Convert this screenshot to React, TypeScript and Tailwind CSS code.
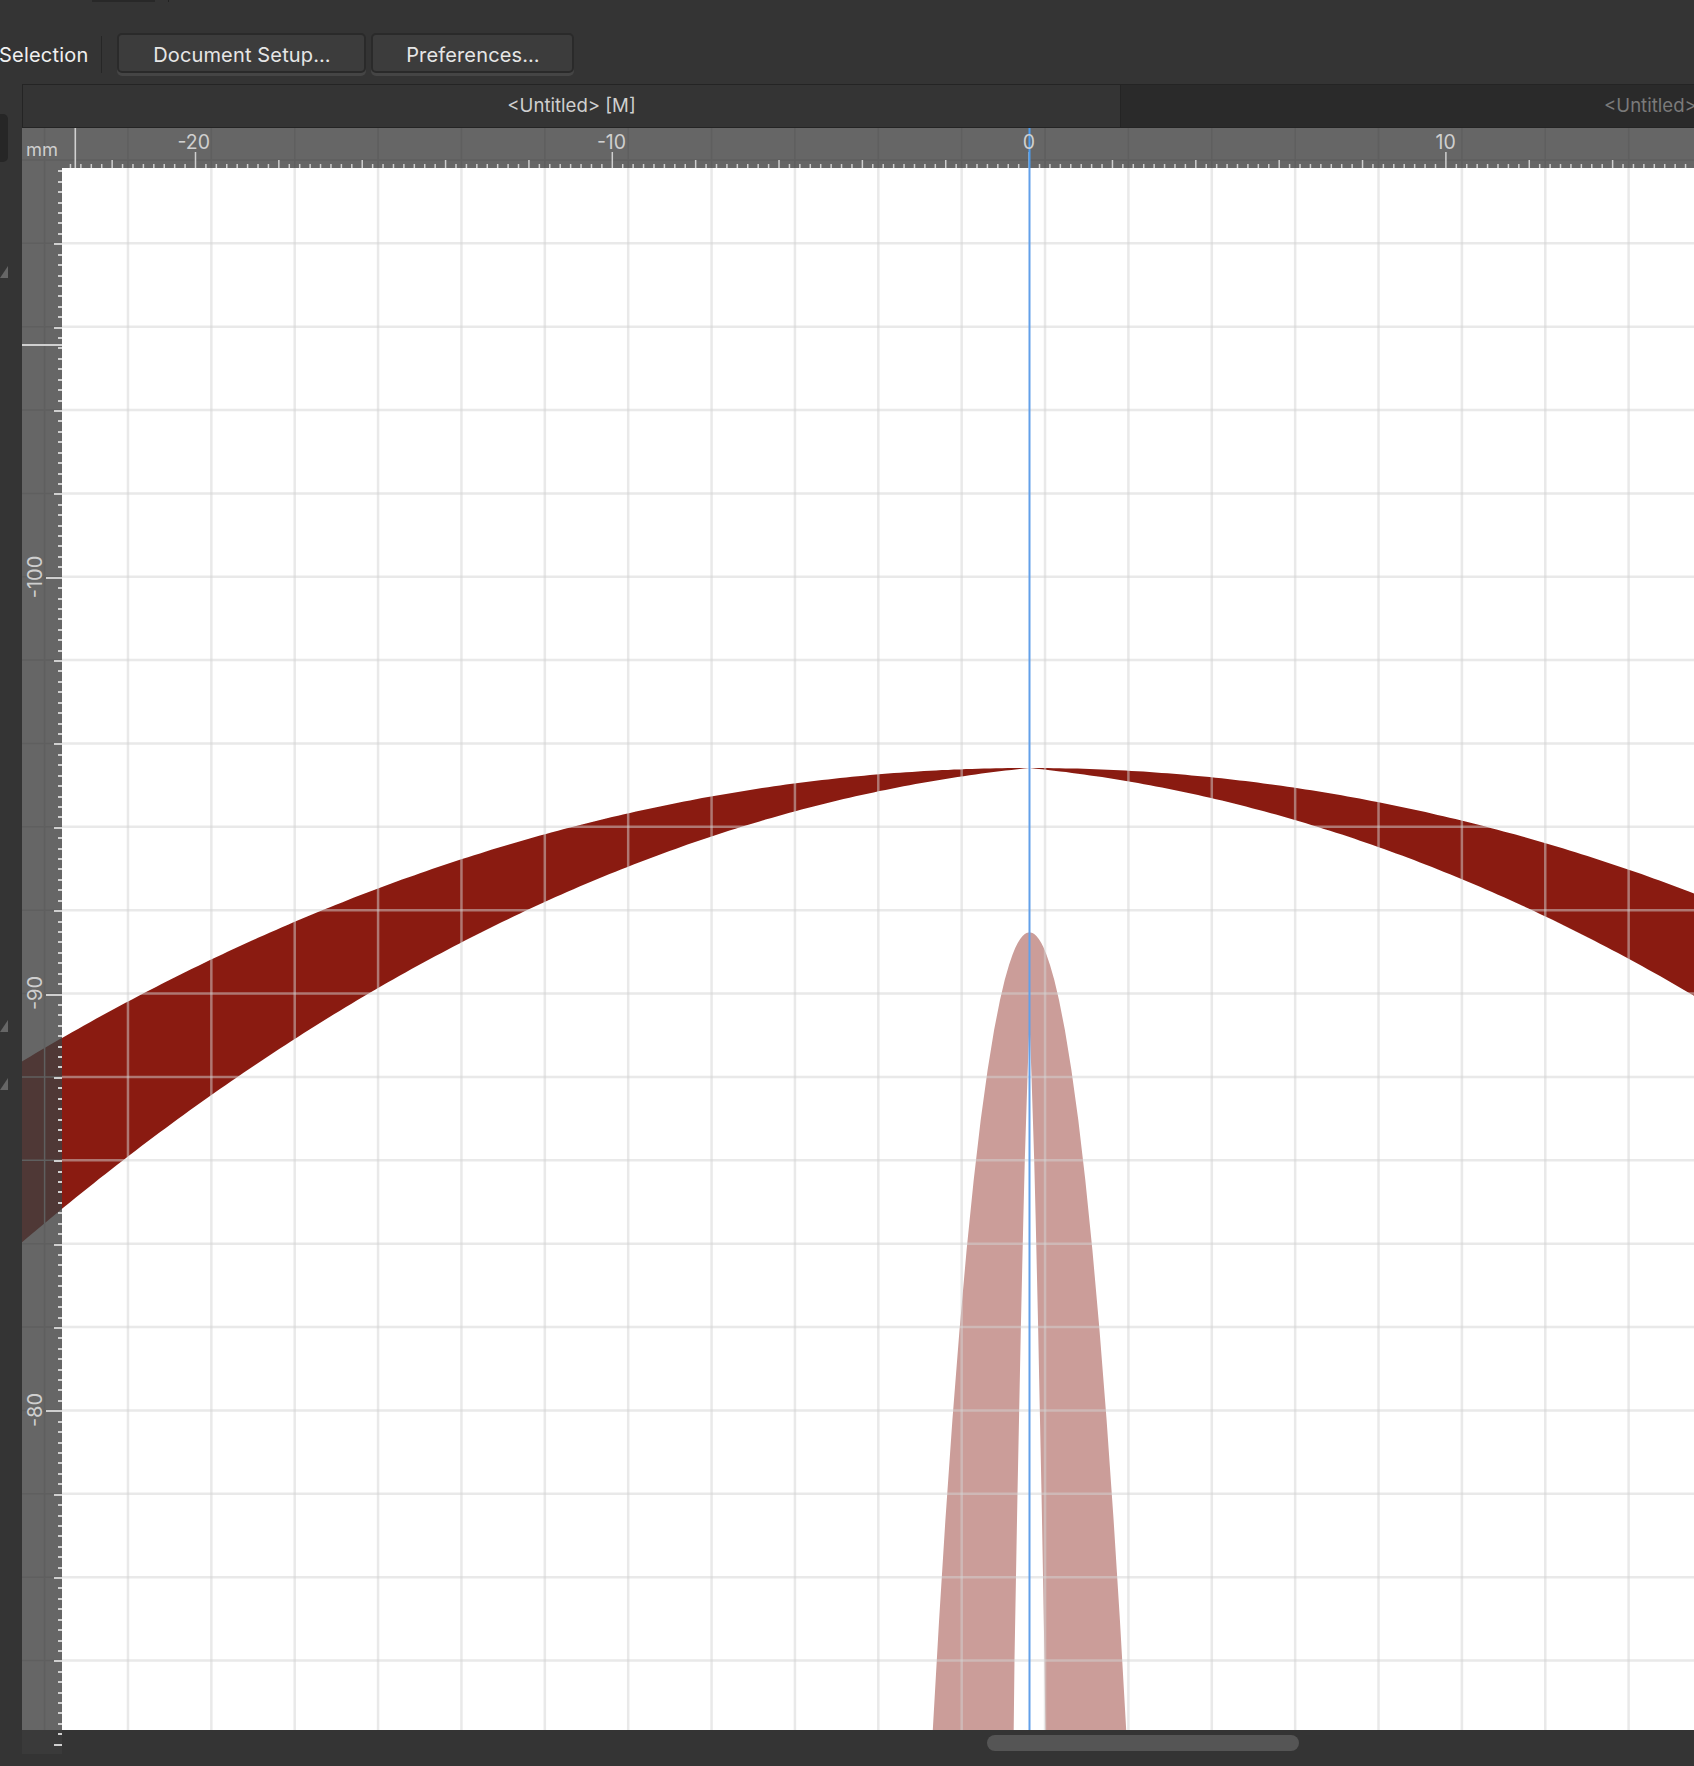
const OX = 1029.5;
const TIP = 768;
const GX = Array.from({ length: 21 }, (_, i) => 44.6 + 83.37 * i);
const GY = Array.from({ length: 20 }, (_, i) => 159.9 + 83.37 * i);
const CANVAS_LEFT = 62;
const CANVAS_TOP = 168;
const BOTTOM = 1730;

const topEdge = (d: number) => TIP + 2.8e-4 * d * d + 9e-12 * d * d * d * d;
const lowEdge = (d: number) => TIP + 0.1 * d + 3.6e-4 * d * d + 7.8e-9 * d * d * d;

function archLeft() {
  const a: string[] = [];
  for (let x = 0; x <= OX; x += 6) a.push(`${x},${topEdge(OX - x).toFixed(1)}`);
  a.push(`${OX},${TIP}`);
  for (let x = OX; x >= 0; x -= 6) a.push(`${x},${lowEdge(OX - x).toFixed(1)}`);
  return a.join(" ");
}
function archRight() {
  const a: string[] = [];
  for (let x = OX; x <= 1720; x += 6) a.push(`${x},${topEdge(x - OX).toFixed(1)}`);
  for (let x = 1720; x >= OX; x -= 6) a.push(`${x},${lowEdge(x - OX).toFixed(1)}`);
  return a.join(" ");
}

const outerHw = (y: number) => {
  const t = Math.max(0, y - 932.3);
  return Math.sqrt(t) * (3.6 - 0.00022 * t);
};
const INNER: [number, number][] = [
  [1020, 0], [1076, 2], [1160, 4.7], [1220, 6.2], [1326, 8.6], [1410, 10.3], [1493, 12], [1520, 12.5], [1660, 15], [1730, 15.8],
];
function spirePoints() {
  const l: string[] = [];
  const r: string[] = [];
  const ys = [932.3, 933, 934, 936, 939, 943, 948, 955, 965, 980, 1000, 1030, 1070, 1120, 1180, 1250, 1330, 1420, 1520, 1620, 1730];
  ys.forEach((y) => {
    const h = outerHw(y);
    l.push(`${(OX - h).toFixed(1)},${y}`);
    r.unshift(`${(OX + h).toFixed(1)},${y}`);
  });
  const innerL = [...INNER].reverse().map(([y, h]) => `${(OX - h).toFixed(1)},${y}`);
  const innerR = INNER.map(([y, h]) => `${(OX + h).toFixed(1)},${y}`);
  return [...l, ...innerL, ...innerR, ...r].join(" ");
}

const topTicks: { x: number; len: number }[] = [];
for (let i = 0; i < 170; i++) {
  const x = 195.5 + 10.42 * i;
  if (x > 1694) break;
  const n = i % 40;
  topTicks.push({ x, len: n === 0 ? 16 : n % 8 === 0 ? 8 : 4 });
}
for (let i = 1; i < 13; i++) {
  const x = 195.5 - 10.42 * i;
  if (x < 66) break;
  topTicks.push({ x, len: i % 8 === 0 ? 8 : 4 });
}

const leftTicks: { y: number; len: number }[] = [];
for (let i = 0; i < 160; i++) {
  const y = 159.9 + 10.42 * i;
  if (y < 170 || y > 1750) continue;
  const n = i % 8;
  const big = Math.abs(y - 577) < 3 || Math.abs(y - 994) < 3 || Math.abs(y - 1410) < 3;
  leftTicks.push({ y, len: big ? 16 : n === 0 ? 8 : 4 });
}

const TOP_LABELS = [
  { t: "-20", x: 193.7 },
  { t: "-10", x: 611.5 },
  { t: "0", x: 1029 },
  { t: "10", x: 1445.6 },
];
const LEFT_LABELS = [
  { t: "-100", y: 577 },
  { t: "-90", y: 993 },
  { t: "-80", y: 1410 },
];

function CanvasDrawing() {
  return (
    <svg
      className="absolute left-0 top-[44px] block h-[1626px] w-[1672px]"
      viewBox="22 128 1672 1626"
      aria-hidden="true"
    >
      <defs>
        <clipPath id="page">
          <rect x={CANVAS_LEFT} y={CANVAS_TOP} width={1640} height={BOTTOM - CANVAS_TOP} />
        </clipPath>
        <clipPath id="rulerLeft">
          <rect x={22} y={CANVAS_TOP} width={40} height={BOTTOM - CANVAS_TOP} />
        </clipPath>
      </defs>
      {/* shapes seen through the vertical ruler */}
      <g clipPath="url(#rulerLeft)">
        <polygon points={archLeft()} fill="#4f3836" />
      </g>
      {/* ruler grid marks */}
      {GX.map((x) => (
        <line key={`rx${x}`} x1={x} x2={x} y1={128} y2={x < 62 ? BOTTOM : 168} stroke="#5f5f5f" strokeWidth={1.5} />
      ))}
      {GY.filter((y) => y < BOTTOM).map((y) => (
        <line key={`ry${y}`} x1={22} x2={y < 168 ? 1694 : 62} y1={y} y2={y} stroke="#5f5f5f" strokeWidth={1.5} />
      ))}
      {/* shapes and grid on the page */}
      <g clipPath="url(#page)">
        <polygon points={archLeft()} fill="#8a1b11" />
        <polygon points={archRight()} fill="#8a1b11" />
        <polygon points={spirePoints()} fill="#cb9d99" />
        {GX.map((x) => (
          <line key={`gx${x}`} x1={x} x2={x} y1={CANVAS_TOP} y2={BOTTOM} stroke="#d4d4d4" strokeOpacity={0.5} strokeWidth={2.5} />
        ))}
        {GY.map((y) => (
          <line key={`gy${y}`} x1={CANVAS_LEFT} x2={1694} y1={y} y2={y} stroke="#d4d4d4" strokeOpacity={0.5} strokeWidth={2.5} />
        ))}
      </g>
      {/* ruler ticks */}
      {topTicks.map((t) => (
        <rect key={`t${t.x}`} x={t.x - 0.75} y={168 - t.len} width={1.5} height={t.len} fill="#cfcfcf" />
      ))}
      {leftTicks.map((t) => (
        <rect key={`l${t.y}`} x={62 - t.len} y={Math.round(t.y)} width={t.len} height={2} fill="#cfcfcf" />
      ))}
      {/* cursor markers */}
      <rect x={74.5} y={128} width={1.6} height={40} fill="#d0d0d0" />
      <rect x={22} y={344} width={40} height={2} fill="#d0d0d0" />
      {/* guide */}
      <line x1={OX} x2={OX} y1={128} y2={168} stroke="#4a9cf0" strokeWidth={2} />
      <line x1={OX} x2={OX} y1={168} y2={BOTTOM} stroke="#62a0ea" strokeWidth={2} />
    </svg>
  );
}

export default function App() {
  const font = { fontFamily: "Inter, 'Noto Sans', sans-serif" };
  return (
    <div
      className="relative flex h-[1766px] w-[1694px] flex-col overflow-hidden bg-[#343434] font-['Inter',sans-serif]"
      style={font}
    >
      {/* cropped remains of the row above */}
      <div className="absolute left-[92px] top-0 h-[2px] w-[63px] bg-[#282828]" />
      <div className="absolute left-[168px] top-0 h-[2px] w-px bg-[#222222]" />

      {/* toolbar */}
      <div className="flex h-[84px] shrink-0 items-center pt-[22px]">
        <span className="-ml-px mt-[4px] text-[20px] leading-none tracking-[0.2px] text-[#f0f0f0]">Selection</span>
        <div className="ml-[13px] mt-[3px] h-[37px] w-px bg-[#262626]" />
        <button className="ml-[15px] flex h-[40px] w-[249px] items-center justify-center rounded-[5px] border-2 border-[#2a2a2a] bg-[#3c3c3c] pt-[3px] text-[20px] tracking-[0.15px] text-[#e6e6e6] shadow-[0_3px_0_#454545]">
          Document Setup…
        </button>
        <button className="ml-[5px] flex h-[40px] w-[203px] items-center justify-center rounded-[5px] border-2 border-[#2a2a2a] bg-[#3c3c3c] pt-[3px] text-[20px] tracking-[0.15px] text-[#e6e6e6] shadow-[0_3px_0_#454545]">
          Preferences…
        </button>
      </div>

      <div className="flex min-h-0 flex-1">
        {/* left edge column */}
        <div className="flex w-[22px] shrink-0 flex-col items-start">
          <div className="mt-[30px] h-[48px] w-[8px] rounded-r-[5px] bg-[#262626]" />
          <svg className="mt-[104px] h-[12px] w-[8px]" viewBox="0 0 8 12"><polygon points="8,0 8,12 0,12" fill="#666666" /></svg>
          <svg className="mt-[742px] h-[12px] w-[8px]" viewBox="0 0 8 12"><polygon points="8,0 8,12 0,12" fill="#666666" /></svg>
          <svg className="mt-[46px] h-[12px] w-[8px]" viewBox="0 0 8 12"><polygon points="8,0 8,12 0,12" fill="#666666" /></svg>
        </div>

        {/* document */}
        <div className="relative flex min-w-0 flex-1 flex-col">
          {/* tabs */}
          <div className="flex h-[44px] shrink-0 border-y border-[#242424] text-[18.6px]">
            <div className="flex w-[1099px] shrink-0 items-center justify-center border-x border-[#242424] bg-[#343434] text-[#cfcfcf]">
              {"<Untitled> [M]"}
            </div>
            <div className="flex min-w-0 flex-1 items-center overflow-hidden whitespace-nowrap bg-[#2a2a2a] pl-[483px] text-[#7a7a7a]">
              {"<Untitled>"}
            </div>
          </div>

          {/* top ruler */}
          <div className="relative h-[40px] shrink-0 bg-[#666666]">
            <span className="absolute left-[4px] top-[11px] z-10 text-[18.3px] leading-5 text-[#cfcfcf]">mm</span>
          </div>

          {/* vertical ruler + page */}
          <div className="flex min-h-0 flex-1">
            <div className="w-[40px] shrink-0 bg-[#666666]" />
            <div className="flex-1 bg-white" />
          </div>

          {/* bottom bar */}
          <div className="flex h-[36px] shrink-0 items-start bg-[#343434]">
            <div className="h-[24px] w-[40px] shrink-0 bg-[#3a3a3a]" />
            <div className="ml-[925px] mt-[5px] h-[16px] w-[312px] rounded-full bg-[#555555]" />
          </div>

          <CanvasDrawing />

          {TOP_LABELS.map((l) => (
            <span
              key={l.t}
              className="absolute top-[48px] -translate-x-1/2 text-[19.5px] leading-5 text-[#cfcfcf]"
              style={{ left: l.x - 22 }}
            >
              {l.t}
            </span>
          ))}
          {LEFT_LABELS.map((l) => (
            <span
              key={l.t}
              className="absolute left-[13px] h-[20px] w-[60px] -translate-x-1/2 -translate-y-1/2 -rotate-90 text-center text-[20px] leading-5 text-[#cfcfcf]"
              style={{ top: l.y - 84 }}
            >
              {l.t}
            </span>
          ))}
        </div>
      </div>
    </div>
  );
}
